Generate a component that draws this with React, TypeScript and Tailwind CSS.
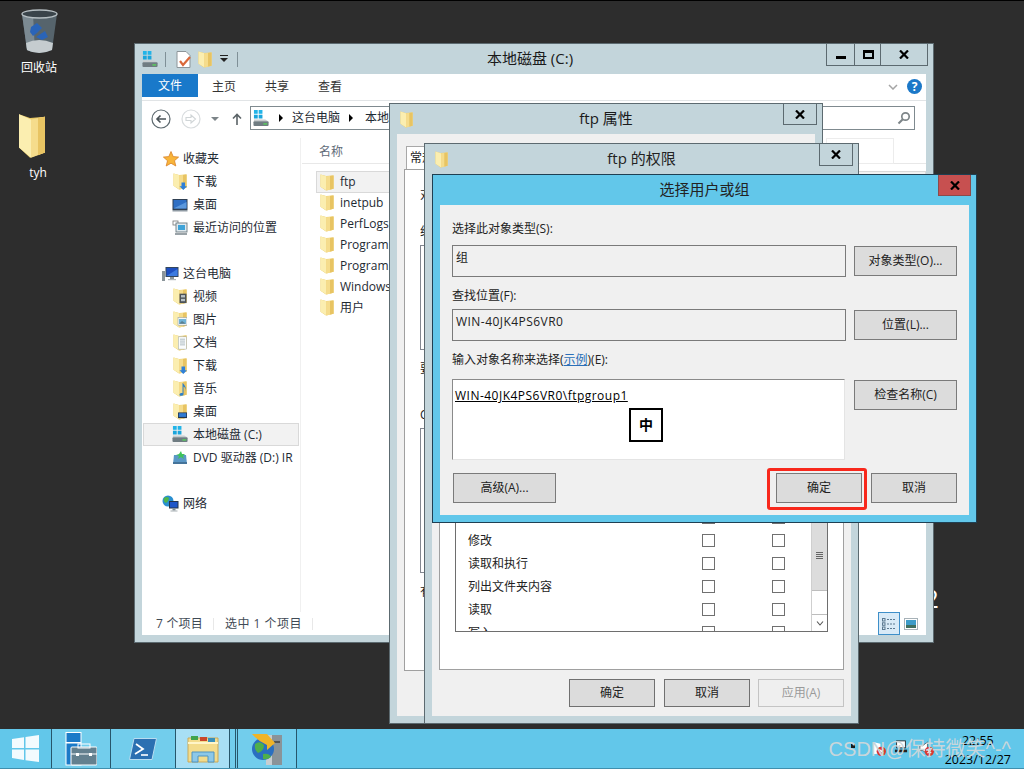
import React from "react";

type Kids = { children?: React.ReactNode };

function Folder({ className = "", children }: { className?: string } & Kids) {
  return (
    <svg viewBox="0 0 28 36" preserveAspectRatio="none" className={className}>
      <path d="M1 1 L12 4 L27 3 L27 31 L12 35 L1 27 Z" fill="#e9c965" />
      <path d="M1 1 L13 5 L13 35 L1 27 Z" fill="#fbeeb0" />
      <path d="M13 5 L27 3 L27 31 L13 35 Z" fill="#f5dc8c" />
      <path d="M20 4 L27 3 L27 31 L20 33 Z" fill="#e8c463" />
      {children}
    </svg>
  );
}

function Drive({ className = "" }: { className?: string }) {
  return (
    <svg viewBox="0 0 18 18" className={className}>
      <rect x="1" y="0" width="4" height="4" fill="#22b4e8" />
      <rect x="6" y="0" width="4" height="4" fill="#22b4e8" />
      <rect x="1" y="5" width="4" height="4" fill="#1aa5dc" />
      <rect x="6" y="5" width="4" height="4" fill="#1aa5dc" />
      <path d="M1 10 H13 L16 12 H1 Z" fill="#c7ccce" />
      <rect x="0.5" y="12" width="16" height="5" rx="1" fill="#6f7c82" />
      <rect x="11" y="14" width="4" height="1.5" fill="#58d15c" />
    </svg>
  );
}

function Star() {
  return (
    <svg viewBox="0 0 16 16" className="w-[16px] h-[16px]">
      <path d="M8 0.5 L10.2 5.6 L15.6 6.1 L11.5 9.7 L12.8 15 L8 12.2 L3.2 15 L4.5 9.7 L0.4 6.1 L5.8 5.6 Z" fill="#f8b53a" stroke="#d9812a" strokeWidth="0.8" />
    </svg>
  );
}

function Monitor({ className = "" }: { className?: string }) {
  return (
    <svg viewBox="0 0 16 16" className={className}>
      <rect x="0.5" y="2" width="15" height="11" fill="#2f3f52" />
      <rect x="1.5" y="3" width="13" height="8.5" fill="#2f6fc4" />
      <path d="M1.5 11.5 L14.5 5 V11.5 Z" fill="#5b98dd" />
      <rect x="0.5" y="13" width="15" height="1.5" fill="#8f9aa3" />
    </svg>
  );
}

function Recent() {
  return (
    <svg viewBox="0 0 16 16" className="w-[16px] h-[16px]">
      <rect x="1" y="1" width="5" height="4" fill="#fff" stroke="#777" strokeWidth="0.8" />
      <rect x="4" y="3" width="11" height="9" fill="#dfe9ee" stroke="#6d7b82" strokeWidth="0.9" />
      <rect x="6" y="5" width="7" height="5" fill="#3fa3d8" />
      <rect x="3" y="13" width="12" height="2" fill="#9aa3a8" />
    </svg>
  );
}

function Computer() {
  return (
    <svg viewBox="0 0 17 16" className="w-[17px] h-[16px]">
      <rect x="0" y="5" width="3" height="10" fill="#8b959a" />
      <rect x="3.5" y="1" width="13" height="10" fill="#33465c" />
      <rect x="4.5" y="2" width="11" height="8" fill="#1e4fc0" />
      <path d="M4.5 10 L15.5 3 V10 Z" fill="#3b7ae0" />
      <rect x="8" y="11" width="4" height="2" fill="#8b959a" />
      <rect x="6" y="13" width="8" height="1.2" fill="#adb4b8" />
    </svg>
  );
}

function Net() {
  return (
    <svg viewBox="0 0 17 17" className="w-[17px] h-[17px]">
      <circle cx="6" cy="6" r="5.5" fill="#2a8fd0" />
      <path d="M2 3 Q5 1 7 3 Q7 6 4 8 Q1 7 2 3 Z" fill="#4fb54a" />
      <rect x="7" y="6" width="9.5" height="7.5" fill="#24344a" />
      <rect x="8" y="7" width="7.5" height="5.5" fill="#1f56c8" />
      <rect x="10.5" y="13.5" width="3" height="2" fill="#7f8b91" />
      <rect x="8.5" y="15.5" width="7" height="1" fill="#a7afb3" />
    </svg>
  );
}

function Dvd() {
  return (
    <svg viewBox="0 0 16 16" className="w-[16px] h-[16px]">
      <path d="M2 5 H14 L15 14 H1 Z" fill="#5b97c6" />
      <rect x="1" y="12" width="14" height="2" fill="#45749a" />
      <path d="M9 1 L7 4 L4 5 L7 6 L6 9 L9 7 L12 9 L11 6 L13 4 H10 Z" fill="#3fc25a" />
    </svg>
  );
}

const DownArrow = () => <path d="M17 20 H24 V28 H28 L20.5 36 L13 28 H17 Z" fill="#2f80d8" />;
const Film = () => (
  <g>
    <rect x="13" y="12" width="14" height="20" fill="#4c5358" />
    <rect x="16" y="15" width="8" height="5" fill="#b8c2c7" />
    <rect x="16" y="23" width="8" height="5" fill="#b8c2c7" />
  </g>
);
const Pic = () => (
  <g>
    <rect x="10" y="14" width="18" height="16" fill="#f4f7f8" stroke="#8a969c" />
    <rect x="12" y="17" width="14" height="10" fill="#6fb3d8" />
    <path d="M12 27 L18 21 L26 27 Z" fill="#5c7f8f" />
  </g>
);
const Doc = () => (
  <g>
    <rect x="11" y="6" width="16" height="26" fill="#fafcfd" stroke="#9aa5ab" />
    <path d="M14 11 H24 M14 15 H24 M14 19 H24 M14 23 H24" stroke="#8ea0aa" strokeWidth="1.4" />
  </g>
);
const Note = () => <path d="M19 6 C24 12 27 16 25 24 C26 18 23 15 21 14 V30 C21 34 13 35 13 31 C13 28 17 27 19 28 Z" fill="#2f80c8" />;
const Desk = () => (
  <g>
    <rect x="10" y="20" width="18" height="12" fill="#24344a" />
    <rect x="11.5" y="21.5" width="15" height="8" fill="#2f79d2" />
  </g>
);

function NavRow({ icon, label, top, sel }: { icon: React.ReactNode; label: string; top?: boolean; sel?: boolean }) {
  if (sel) {
    return (
      <div className="flex items-center h-[23px] pl-[23px] ml-[1px] border border-[#d9d9d9] bg-[#f2f2f2] whitespace-nowrap">
        <span className="w-[26px] flex justify-center shrink-0">{icon}</span>
        <span>{label}</span>
      </div>
    );
  }
  if (top) {
    return (
      <div className="flex items-center h-[23px] pl-[16px] whitespace-nowrap">
        <span className="w-[25px] flex justify-center shrink-0">{icon}</span>
        <span>{label}</span>
      </div>
    );
  }
  return (
    <div className="flex items-center h-[23px] pl-[25px] whitespace-nowrap">
      <span className="w-[26px] flex justify-center shrink-0">{icon}</span>
      <span>{label}</span>
    </div>
  );
}

function X({ className = "" }: { className?: string }) {
  return (
    <svg viewBox="0 0 10 9" className={className}>
      <path d="M1 0.5 L9 8.5 M9 0.5 L1 8.5" stroke="currentColor" strokeWidth="2.2" />
    </svg>
  );
}

function Explorer() {
  const files = ["ftp", "inetpub", "PerfLogs", "Program Files", "Program Files (x86)", "Windows", "用户"];
  return (
    <div className="absolute left-[134px] top-[42px] w-[800px] h-[600px] border border-[#5c6a70] bg-[#c3d5db] flex flex-col px-[7px] pb-[7px]">
      <div className="relative h-[30px] shrink-0 flex items-start">
        <div className="absolute inset-x-0 top-[3px] text-center text-[15px] leading-[22px] pr-[8px] text-[#1a1a1a]">本地磁盘 (C:)</div>
        <div className="relative flex items-center h-[30px] gap-[0px]">
          <Drive className="w-[17px] h-[17px]" />
          <span className="w-px h-[15px] bg-[#7f9097] ml-[6px]" />
          <svg viewBox="0 0 15 17" className="w-[15px] h-[17px] ml-[10px]">
            <path d="M1 0.5 H10 L14 4.5 V16.5 H1 Z" fill="#fff" stroke="#8c9599" />
            <path d="M4 10 L7 14 L14 6" fill="none" stroke="#d9683a" strokeWidth="2.2" />
          </svg>
          <Folder className="w-[14px] h-[17px] ml-[7px]" />
          <svg viewBox="0 0 8 8" className="w-[8px] h-[8px] ml-[8px]">
            <rect x="0" y="0" width="8" height="1" fill="#222" />
            <path d="M0 3 H8 L4 7 Z" fill="#222" />
          </svg>
          <span className="w-px h-[15px] bg-[#7f9097] ml-[9px]" />
        </div>
        <div className="relative ml-auto mr-[-2px] flex h-[22px] border border-t-0 border-[#5c6a70] text-black">
          <div className="w-[28px] flex items-center justify-center border-r border-[#5c6a70]">
            <span className="w-[10px] h-[3px] bg-black mt-[5px]" />
          </div>
          <div className="w-[26px] flex items-center justify-center border-r border-[#5c6a70]">
            <span className="w-[11px] h-[9px] ml-[2px] border-2 border-black border-t-[3px]" />
          </div>
          <div className="w-[46px] flex items-center justify-center">
            <X className="w-[10px] h-[9px]" />
          </div>
        </div>
      </div>
      <div className="flex-1 min-h-0 bg-white flex flex-col text-[12px] text-[#1e2a33]">
        <div className="h-[27px] shrink-0 border-b border-[#e1e4e6] flex items-start">
          <div className="w-[56px] h-[23px] bg-[#1979ca] text-white flex items-center justify-center">文件</div>
          <div className="ml-[14px] h-[26px] flex items-center text-[#333]">主页</div>
          <div className="ml-[29px] h-[26px] flex items-center text-[#333]">共享</div>
          <div className="ml-[29px] h-[26px] flex items-center text-[#333]">查看</div>
          <svg viewBox="0 0 10 6" className="w-[10px] h-[6px] ml-auto mt-[10px] mr-[9px]">
            <path d="M1 1 L5 5 L9 1" fill="none" stroke="#a5a5a5" strokeWidth="1.5" />
          </svg>
          <div className="mr-[4px] mt-[5px] w-[15px] h-[15px] rounded-full bg-[#1b78c8] text-white text-[12px] font-bold leading-[15px] text-center">?</div>
        </div>
        <div className="h-[37px] shrink-0 flex items-start pt-[5px] pr-[11px]">
          <svg viewBox="0 0 20 20" className="w-[20px] h-[20px] ml-[9px] mt-[3px]">
            <circle cx="10" cy="10" r="9" fill="#fff" stroke="#5e6a70" strokeWidth="1.2" />
            <path d="M15 10 H6 M9.5 6.5 L6 10 L9.5 13.5" fill="none" stroke="#4a5358" strokeWidth="1.6" />
          </svg>
          <svg viewBox="0 0 20 20" className="w-[20px] h-[20px] ml-[10px] mt-[3px]">
            <circle cx="10" cy="10" r="9" fill="#fff" stroke="#d8dcde" strokeWidth="1.2" />
            <path d="M5 8.5 H10 V6 L14.5 10 L10 14 V11.5 H5 Z" fill="none" stroke="#d0d5d7" strokeWidth="1.1" />
          </svg>
          <svg viewBox="0 0 8 4" className="w-[8px] h-[4px] ml-[10px] mt-[11px]">
            <path d="M0 0 H8 L4 4 Z" fill="#7c8488" />
          </svg>
          <svg viewBox="0 0 10 12" className="w-[10px] h-[12px] ml-[13px] mt-[7px]">
            <path d="M5 12 V1.5 M1 5.5 L5 1.5 L9 5.5" fill="none" stroke="#5b6367" strokeWidth="1.6" />
          </svg>
          <div className="flex-1 ml-[8px] h-[24px] border border-[#7f8a8f] flex items-center pl-[2px] whitespace-nowrap overflow-hidden">
            <Drive className="w-[17px] h-[17px]" />
            <span className="ml-[9px] w-0 h-0 border-y-[4px] border-y-transparent border-l-[4px] border-l-black" />
            <span className="ml-[9px]">这台电脑</span>
            <span className="ml-[9px] w-0 h-0 border-y-[4px] border-y-transparent border-l-[4px] border-l-black" />
            <span className="ml-[12px]">本地磁盘 (C:)</span>
          </div>
          <div className="ml-[8px] w-[100px] h-[24px] border border-[#7f8a8f] flex items-center justify-end pr-[3px]">
            <svg viewBox="0 0 14 14" className="w-[14px] h-[14px]">
              <circle cx="8.5" cy="5.5" r="3.7" fill="none" stroke="#7d8588" strokeWidth="1.7" />
              <path d="M5.8 8.2 L1.5 12.5" stroke="#7d8588" strokeWidth="2" />
            </svg>
          </div>
        </div>
        <div className="flex-1 min-h-0 flex">
          <div className="w-[159px] shrink-0 border-r border-[#f0f0f0] pt-[9px] pr-[1px]">
            <NavRow top icon={<Star />} label="收藏夹" />
            <NavRow icon={<Folder className="w-[14px] h-[17px]"><DownArrow /></Folder>} label="下载" />
            <NavRow icon={<Monitor className="w-[16px] h-[16px]" />} label="桌面" />
            <NavRow icon={<Recent />} label="最近访问的位置" />
            <div className="h-[23px]" />
            <NavRow top icon={<Computer />} label="这台电脑" />
            <NavRow icon={<Folder className="w-[14px] h-[17px]"><Film /></Folder>} label="视频" />
            <NavRow icon={<Folder className="w-[14px] h-[17px]"><Pic /></Folder>} label="图片" />
            <NavRow icon={<Folder className="w-[14px] h-[17px]"><Doc /></Folder>} label="文档" />
            <NavRow icon={<Folder className="w-[14px] h-[17px]"><DownArrow /></Folder>} label="下载" />
            <NavRow icon={<Folder className="w-[14px] h-[17px]"><Note /></Folder>} label="音乐" />
            <NavRow icon={<Folder className="w-[14px] h-[17px]"><Desk /></Folder>} label="桌面" />
            <NavRow sel icon={<Drive className="w-[17px] h-[17px]" />} label="本地磁盘 (C:)" />
            <div className="overflow-hidden"><NavRow icon={<Dvd />} label="DVD 驱动器 (D:) IR" /></div>
            <div className="h-[23px]" />
            <NavRow top icon={<Net />} label="网络" />
          </div>
          <div className="flex-1 min-w-0 pl-[1px] flex flex-col">
            <div className="h-[26px] shrink-0 border-b border-[#e8e8e8] flex items-center pl-[17px] pt-[2px] text-[#5f6b78] relative">
              名称
              <span className="absolute right-[32px] top-0 w-[68px] h-[26px] border border-[#ececec]" />
            </div>
            <div className="pt-[7px]">
              {files.map((f, i) =>
                i === 0 ? (
                  <div key={f} className="ml-[14px] h-[22px] -mb-[1px] flex items-center pl-[3px] border border-[#d9d9d9] bg-[#f2f2f2]">
                    <Folder className="w-[14px] h-[17px]" />
                    <span className="ml-[6px]">{f}</span>
                  </div>
                ) : (
                  <div key={f} className="ml-[14px] h-[21px] flex items-center pl-[4px]">
                    <Folder className="w-[14px] h-[17px]" />
                    <span className="ml-[6px]">{f}</span>
                  </div>
                )
              )}
            </div>
          </div>
        </div>
        <div className="h-[23px] shrink-0 flex items-center text-[#3f4a55]">
          <span className="ml-[14px] tracking-[0.2px]">7 个项目</span>
          <span className="ml-[10px] w-px h-[12px] bg-[#e8e8e8]" />
          <span className="ml-[11px] tracking-[0.5px]">选中 1 个项目</span>
          <span className="ml-[10px] w-px h-[12px] bg-[#e8e8e8]" />
          <div className="ml-auto flex items-center mr-[8px]">
            <div className="w-[22px] h-[23px] border border-[#3e8fc9] bg-[#d8eaf7] flex items-center justify-center">
              <svg viewBox="0 0 14 12" className="w-[14px] h-[12px]">
                <path d="M5 1.5 H14 M5 6 H14 M5 10.5 H14" stroke="#5a7890" strokeDasharray="2 1" />
                <rect x="0.5" y="0.5" width="2.5" height="2.5" fill="none" stroke="#5a7890" />
                <rect x="0.5" y="4.8" width="2.5" height="2.5" fill="none" stroke="#5a7890" />
                <rect x="0.5" y="9" width="2.5" height="2.5" fill="none" stroke="#5a7890" />
              </svg>
            </div>
            <svg viewBox="0 0 14 12" className="w-[14px] h-[12px] ml-[4px]">
              <rect x="0.5" y="0.5" width="13" height="11" fill="#fff" stroke="#a7b2b8" />
              <rect x="2" y="2" width="10" height="5" fill="#3d9cc9" />
              <rect x="2" y="7" width="10" height="3" fill="#3f6f5f" />
            </svg>
          </div>
        </div>
      </div>
    </div>
  );
}

function Properties() {
  return (
    <div className="absolute left-[389px] top-[102px] w-[434px] h-[621px] border border-[#5c6a70] bg-[#c3d5db] flex flex-col px-[7px] pb-[7px] text-[12px] text-[#1a1a1a]">
      <div className="relative h-[30px] shrink-0 flex items-start">
        <Folder className="w-[13px] h-[17px] mt-[7px] ml-[3px]" />
        <div className="absolute inset-x-0 top-[3px] text-center text-[15px] leading-[22px]">ftp 属性</div>
        <div className="relative ml-auto mr-[-2px] w-[34px] h-[21px] border border-t-0 border-[#5c6a70] flex items-center justify-center">
          <X className="w-[10px] h-[9px] text-black" />
        </div>
      </div>
      <div className="flex-1 min-h-0 bg-[#f0f0f0] flex flex-col px-[7px]">
        <div className="mt-[12px] h-[23px] w-[60px] ml-[2px] border border-b-0 border-[#a8a8a8] bg-white flex items-center pl-[3px]">常规</div>
        <div className="h-[502px] border border-[#a0a0a0] bg-white pl-[15px] flex flex-col">
          <div className="mt-[15px] leading-[20px] whitespace-nowrap">对象名称:</div>
          <div className="mt-[17px] leading-[20px] whitespace-nowrap">组或用户名(G):</div>
          <div className="mt-[3px] h-[105px] border border-[#828790]" />
          <div className="mt-[9px] leading-[20px] whitespace-nowrap">要更改权限，请单击“编辑”。</div>
          <div className="mt-[26px] leading-[20px] whitespace-nowrap">CREATOR OWNER 的权限</div>
          <div className="mt-[3px] h-[145px] border border-[#828790]" />
          <div className="mt-[9px] leading-[20px] whitespace-nowrap">有关特殊权限或高级设置，请单击“高级”。</div>
        </div>
      </div>
    </div>
  );
}

function Check() {
  return <span className="w-[13px] h-[13px] shrink-0 border border-[#707070] bg-white" />;
}

function PermRow({ label }: { label: string }) {
  return (
    <div className="h-[23px] shrink-0 flex items-center pl-[12px]">
      <span className="w-[234px] shrink-0 whitespace-nowrap">{label}</span>
      <Check />
      <span className="w-[57px] shrink-0" />
      <Check />
    </div>
  );
}

function Permissions() {
  return (
    <div className="absolute left-[424px] top-[142px] w-[435px] h-[581px] border border-[#5c6a70] bg-[#c3d5db] flex flex-col px-[7px] pb-[7px] text-[12px] text-[#222]">
      <div className="relative h-[30px] shrink-0 flex items-start">
        <Folder className="w-[13px] h-[17px] mt-[7px] ml-[3px]" />
        <div className="absolute inset-x-0 top-[3px] text-center text-[15px] leading-[22px]">ftp 的权限</div>
        <div className="relative ml-auto mr-[-2px] w-[34px] h-[22px] border border-t-0 border-[#5c6a70] flex items-center justify-center">
          <X className="w-[10px] h-[9px] text-black" />
        </div>
      </div>
      <div className="flex-1 min-h-0 bg-[#f0f0f0] flex flex-col px-[7px]">
        <div className="mt-[16px] h-[480px] border border-[#a0a0a0] bg-white flex flex-col justify-end px-[15px] pb-[37px]">
          <div className="h-[126px] border border-t-0 border-[#6e6e6e] flex overflow-hidden">
            <div className="flex-1 min-w-0 flex flex-col">
              <PermRow label="" />
              <PermRow label="修改" />
              <PermRow label="读取和执行" />
              <PermRow label="列出文件夹内容" />
              <PermRow label="读取" />
              <PermRow label="写入" />
            </div>
            <div className="w-[16px] shrink-0 border-l border-[#cfcfcf] flex flex-col">
              <div className="h-[85px] bg-[#dcdcdc] flex flex-col justify-end items-center gap-[1px] pb-[31px] border-b border-[#bdbdbd]">
                <span className="w-[7px] h-px bg-[#666]" />
                <span className="w-[7px] h-px bg-[#666]" />
                <span className="w-[7px] h-px bg-[#666]" />
                <span className="w-[7px] h-px bg-[#666]" />
              </div>
              <div className="flex-1" />
              <div className="h-[17px] border-t border-[#bdbdbd] flex items-center justify-center">
                <svg viewBox="0 0 8 5" className="w-[8px] h-[5px]">
                  <path d="M1 0.5 L4 4 L7 0.5" fill="none" stroke="#555" strokeWidth="1.1" />
                </svg>
              </div>
            </div>
          </div>
        </div>
        <div className="mt-[9px] flex justify-end">
          <div className="w-[86px] h-[28px] border border-[#707070] bg-[#dcdcdc] flex items-center justify-center">确定</div>
          <div className="ml-[9px] w-[86px] h-[28px] border border-[#707070] bg-[#dcdcdc] flex items-center justify-center">取消</div>
          <div className="ml-[8px] w-[86px] h-[28px] border border-[#c4c4c4] bg-[#efefef] text-[#9a9a9a] flex items-center justify-center">应用(A)</div>
        </div>
      </div>
    </div>
  );
}

function SelectDialog() {
  return (
    <div className="absolute left-[432px] top-[173px] w-[545px] h-[349px] border border-[#1f3f52] bg-[#62c7ea] flex flex-col px-[7px] pb-[7px] text-[12px] text-[#222]">
      <div className="relative h-[30px] shrink-0 flex items-start">
        <div className="absolute inset-x-0 top-[3px] text-center text-[15px] leading-[22px]">选择用户或组</div>
        <div className="relative ml-auto mr-[-2px] w-[33px] h-[21px] bg-[#c75050] border border-t-0 border-[#8c4a4a] flex items-center justify-center">
          <X className="w-[10px] h-[9px] text-black" />
        </div>
      </div>
      <div className="flex-1 min-h-0 bg-[#f0f0f0] px-[12px] pt-[14px] flex flex-col">
        <div className="leading-[20px]">选择此对象类型(S):</div>
        <div className="mt-[6px] flex items-start">
          <div className="w-[394px] h-[32px] border border-[#7a7a7a] pl-[3px] pt-[2px] leading-[20px]">组</div>
          <div className="ml-[8px] mt-[1px] w-[103px] h-[30px] border border-[#7a7a7a] bg-[#dcdcdc] flex items-center justify-center">对象类型(O)...</div>
        </div>
        <div className="mt-[9px] leading-[20px]">查找位置(F):</div>
        <div className="mt-[3px] flex items-start">
          <div className="w-[394px] h-[32px] border border-[#7a7a7a] pl-[3px] pt-[2px] leading-[20px] tracking-[0.45px]">WIN-40JK4PS6VR0</div>
          <div className="ml-[8px] mt-[1px] w-[103px] h-[30px] border border-[#7a7a7a] bg-[#dcdcdc] flex items-center justify-center">位置(L)...</div>
        </div>
        <div className="mt-[9px] leading-[20px]">
          输入对象名称来选择(<span className="text-[#2a6fb8] underline">示例</span>)(E):
        </div>
        <div className="mt-[9px] flex items-start">
          <div className="relative w-[393px] h-[81px] bg-white border border-[#8a8a8a] border-b-[#e4e4e4] border-r-[#e4e4e4] pl-[2px] pt-[6px] leading-[20px] text-black">
            <span className="underline tracking-[0.48px]">WIN-40JK4PS6VR0\ftpgroup1</span>
            <div className="absolute left-[176px] top-[28px] w-[34px] h-[34px] border-2 border-black bg-white flex items-center justify-center text-[14px] font-bold">中</div>
          </div>
          <div className="ml-[9px] mt-[1px] w-[103px] h-[30px] border border-[#7a7a7a] bg-[#dcdcdc] flex items-center justify-center">检查名称(C)</div>
        </div>
        <div className="mt-[13px] flex items-start">
          <div className="ml-[1px] w-[103px] h-[30px] border border-[#7a7a7a] bg-[#dcdcdc] flex items-center justify-center">高级(A)...</div>
          <div className="relative ml-[220px] w-[86px] h-[30px] border border-[#7a7a7a] bg-[#dcdcdc] flex items-center justify-center">
            确定
            <span className="absolute left-[-10px] top-[-6px] w-[100px] h-[42px] border-[3px] border-[#f8281c] rounded-[3px]" />
          </div>
          <div className="ml-[9px] w-[86px] h-[30px] border border-[#7a7a7a] bg-[#dcdcdc] flex items-center justify-center">取消</div>
        </div>
      </div>
    </div>
  );
}

function Taskbar() {
  return (
    <div className="h-[40px] shrink-0 bg-[#62c7ea] border-b border-[#3f8fae] flex relative text-[12px]">
      <div className="w-[52px] border-r border-[#27566b] flex items-center justify-center">
        <svg viewBox="0 0 27 27" className="w-[27px] h-[27px]">
          <path d="M0 4 L12 2.2 V13 H0 Z M13.5 2 L27 0 V13 H13.5 Z M0 14.5 H12 V25 L0 23 Z M13.5 14.5 H27 V27 L13.5 25.2 Z" fill="#fff" fillOpacity="0.92" />
        </svg>
      </div>
      <div className="w-[59px] border-r border-[#27566b] bg-[#72cdec] flex items-center justify-center">
        <svg viewBox="0 0 32 34" className="w-[32px] h-[34px]">
          <rect x="1" y="0.5" width="15" height="10" fill="#1b7ac8" stroke="#fff" />
          <rect x="1" y="11" width="15" height="22" fill="#1b7ac8" stroke="#fff" />
          <rect x="6" y="15" width="26" height="18" rx="1" fill="#63808f" stroke="#fff" />
          <rect x="13" y="12" width="12" height="4" fill="none" stroke="#fff" />
          <path d="M6 22 H32" stroke="#fff" />
          <rect x="11" y="21" width="3" height="3" fill="#fff" />
          <rect x="24" y="21" width="3" height="3" fill="#fff" />
        </svg>
      </div>
      <div className="w-[65px] border-r border-[#27566b] bg-[#72cdec] flex items-center justify-center">
        <svg viewBox="0 0 28 22" className="w-[28px] h-[22px]">
          <path d="M5 0.5 H27.5 L23 21.5 H0.5 Z" fill="#2b70b2" stroke="#b8dcf0" />
          <path d="M7 6 L14 11 L6 16" fill="none" stroke="#fff" strokeWidth="1.8" />
          <path d="M12 17 H19" stroke="#fff" strokeWidth="1.6" />
        </svg>
      </div>
      <div className="w-[54px] border-r border-[#27566b] bg-[#a8dff5] flex items-center justify-center">
        <svg viewBox="0 0 32 28" className="w-[32px] h-[28px]">
          <path d="M1 3 H31 V27 H1 Z" fill="#f3dc8c" stroke="#c9a95a" />
          <rect x="4" y="1" width="7" height="4" fill="#3fa34d" />
          <rect x="13" y="2" width="7" height="4" fill="#c8472b" />
          <rect x="21" y="3" width="7" height="4" fill="#3a8fb8" />
          <path d="M1 8 H31" stroke="#fff5c8" strokeWidth="2" />
          <path d="M5 27 V17 H27 V27 H21 V21 H11 V27 Z" fill="#8cc8e8" stroke="#4f94c2" />
        </svg>
      </div>
      <div className="w-[6px] border-r border-[#27566b] bg-[#72cdec]" />
      <div className="w-[2px] border-r border-[#27566b] bg-[#72cdec]" />
      <div className="w-[59px] border-r border-[#27566b] bg-[#72cdec] flex items-center justify-center">
        <svg viewBox="0 0 32 34" className="w-[32px] h-[34px]">
          <rect x="15" y="3" width="16" height="30" fill="#8a9398" />
          <rect x="15" y="3" width="6" height="30" fill="#c7cdd0" />
          <rect x="23" y="9" width="6" height="2" fill="#555" />
          <circle cx="12" cy="17" r="11" fill="#2a6fc0" />
          <path d="M4 12 Q9 8 13 13 Q13 19 7 21 Q3 18 4 12 Z" fill="#4faf4a" />
          <path d="M12 22 Q18 21 20 25 Q16 28 12 27 Z" fill="#4faf4a" />
          <path d="M1 2 L16 2 L24 11 L16 18 L16 13 Q7 9 1 2 Z" fill="#f0b428" />
        </svg>
      </div>
      <div className="absolute right-[13px] top-0 h-[39px] flex items-center">
        <span className="absolute left-[-94px] top-[15px] w-[4px] h-[4px] bg-[#1a1a1a]" />
        <svg viewBox="0 0 16 16" className="absolute left-[-74px] top-[12px] w-[15px] h-[15px]">
          <path d="M2 1 L10 3 V13 L2 14 Z" fill="#fff" />
          <circle cx="11" cy="11" r="5" fill="#d93a32" />
          <path d="M9 9 L13 13 M13 9 L9 13" stroke="#fff" strokeWidth="1.2" />
        </svg>
        <svg viewBox="0 0 16 16" className="absolute left-[-51px] top-[11px] w-[14px] h-[14px]">
          <rect x="3" y="1" width="10" height="8" fill="#fff" stroke="#222" />
          <rect x="1" y="11" width="14" height="3" fill="#222" />
        </svg>
        <svg viewBox="0 0 16 16" className="absolute left-[-26px] top-[12px] w-[15px] h-[15px]">
          <path d="M1 5 H4 L9 1 V14 L4 10 H1 Z" fill="#fff" stroke="#222" strokeWidth="0.6" />
          <circle cx="11" cy="11" r="5" fill="#d93a32" />
          <path d="M9 9 L13 13 M13 9 L9 13" stroke="#fff" strokeWidth="1.2" />
        </svg>
        <div className="relative text-center text-black leading-[19px] text-[12.5px] pt-[2px]">
          <div>22:55</div>
          <div>2023/12/27</div>
        </div>
      </div>
      <div className="absolute right-[13px] top-[7px] text-[20px] leading-[26px] text-[#c9d6da] whitespace-nowrap font-['Liberation_Sans','Noto_Sans_CJK_SC',sans-serif]">
        CSDN@保持微笑^-^
      </div>
    </div>
  );
}

export default function App() {
  return (
    <div className="relative w-[1024px] h-[769px] overflow-hidden flex flex-col bg-[#2d2d2d] border-t border-black font-['Open_Sans','Noto_Sans_CJK_SC',sans-serif]">
      <div className="relative flex-1 min-h-0">
        <div className="absolute left-[8px] top-[8px] w-[62px] flex flex-col items-center text-white text-[12px]">
          <svg viewBox="0 0 37 45" className="w-[37px] h-[45px]">
            <path d="M1 5 L36 5 L31 41 Q18 47 6 41 Z" fill="#56646c" />
            <path d="M1 5 L12 5 L14 43 Q9 43 6 41 Z" fill="#7c8a92" />
            <path d="M5 34 Q18 28 32 34 L31 41 Q18 47 6 41 Z" fill="#c5cccf" />
            <ellipse cx="18.5" cy="5" rx="17.5" ry="4" fill="#3a444a" stroke="#b5bec2" strokeWidth="1.4" />
            <path d="M10 18 L16 14 L21 19 L16 24 L12 27 L9 23 Z" fill="#2a64b8" />
            <path d="M15 28 L24 22 L27 28 L21 31 Z" fill="#2a64b8" />
          </svg>
          <span className="mt-[4px] leading-[20px]">回收站</span>
        </div>
        <div className="absolute left-[7px] top-[112px] w-[62px] flex flex-col items-center text-white text-[12px]">
          <Folder className="w-[28px] h-[46px] mr-[12px]" />
          <span className="mt-[4px] leading-[20px]">tyh</span>
        </div>
        <div className="absolute left-[924px] top-[580px] text-white text-[26px] leading-[34px]">2</div>
        <Explorer />
        <Properties />
        <Permissions />
        <SelectDialog />
      </div>
      <Taskbar />
    </div>
  );
}
